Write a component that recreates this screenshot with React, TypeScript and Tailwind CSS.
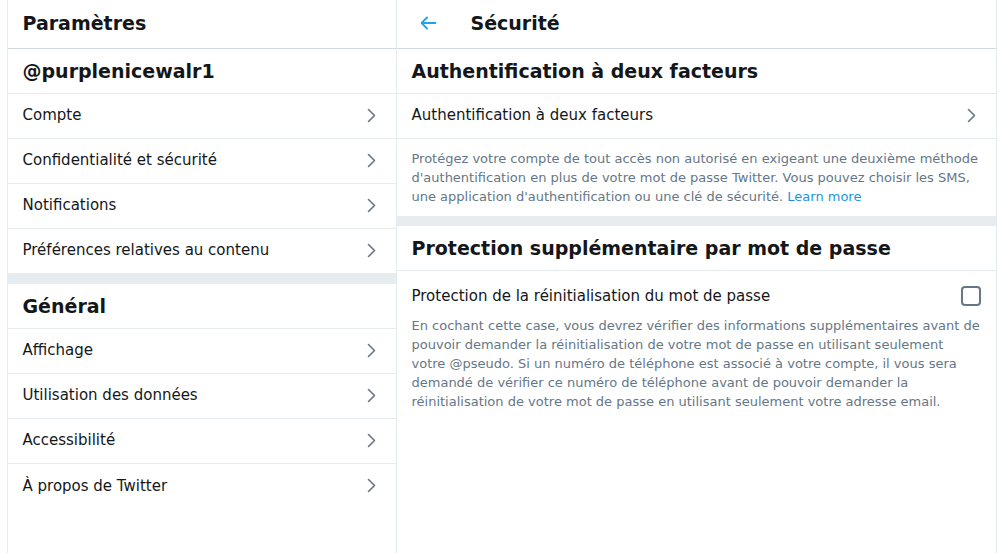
import React from "react";

const Chevron = () => (
  <div className="w-[19px] h-[19px] flex items-center justify-center shrink-0">
    <svg width="9" height="15" viewBox="0 0 9 15" fill="none">
      <polyline points="1.5,1.5 7.5,7.5 1.5,13.5" stroke="#657786" strokeWidth="1.6" strokeLinecap="round" strokeLinejoin="round" />
    </svg>
  </div>
);

const Row = ({ label, last }: { label: string; last?: boolean }) => (
  <div className={`h-[45px] px-[15px] pb-[2px] flex items-center justify-between ${last ? "" : "border-b border-[#e6ecf0]"}`}>
    <span className="text-[15px] leading-[20px]">{label}</span>
    <Chevron />
  </div>
);

const SectionHeader = ({ title }: { title: string }) => (
  <div className="h-[45px] px-[15px] flex items-center border-b border-[#e6ecf0]">
    <span className="text-[19px] font-bold leading-[24px]">{title}</span>
  </div>
);

const Band = () => <div className="h-[10px] bg-[#e6ecf0]" />;

export default function App() {
  return (
    <div className="w-full h-[553px] bg-white overflow-hidden flex justify-center font-['DejaVu_Sans',sans-serif] text-[#14171a]">
      {/* Left column */}
      <div className="w-[390px] shrink-0 border-x border-[#e6ecf0] flex flex-col">
        <div className="h-[49px] px-[15px] pb-[2px] flex items-center border-b border-[#cfd9de]">
          <span className="text-[19px] font-bold leading-[24px]">Paramètres</span>
        </div>
        <SectionHeader title="@purplenicewalr1" />
        <Row label="Compte" />
        <Row label="Confidentialité et sécurité" />
        <Row label="Notifications" />
        <Row label="Préférences relatives au contenu" />
        <Band />
        <SectionHeader title="Général" />
        <Row label="Affichage" />
        <Row label="Utilisation des données" />
        <Row label="Accessibilité" />
        <Row label="À propos de Twitter" last />
      </div>

      {/* Right column */}
      <div className="w-[600px] shrink-0 border-r border-[#e6ecf0] flex flex-col">
        <div className="h-[49px] px-[15px] pb-[2px] flex items-center border-b border-[#cfd9de]">
          <div className="w-[59px] shrink-0 flex items-center">
            <div className="w-[32px] h-[32px] flex items-center justify-center">
              <svg width="22" height="22" viewBox="0 0 24 24" fill="#1da1f2">
                <path d="M20 11H7.414l4.293-4.293c.39-.39.39-1.023 0-1.414s-1.023-.39-1.414 0l-6 6c-.39.39-.39 1.023 0 1.414l6 6c.195.195.45.293.707.293s.512-.098.707-.293c.39-.39.39-1.023 0-1.414L7.414 13H20c.553 0 1-.447 1-1s-.447-1-1-1z" />
              </svg>
            </div>
          </div>
          <span className="text-[19px] font-bold leading-[24px]">Sécurité</span>
        </div>
        <SectionHeader title="Authentification à deux facteurs" />
        <Row label="Authentification à deux facteurs" />
        <div className="px-[15px] pt-[10px] pb-[10px] text-[13px] leading-[19px] text-[#657786]">
          <div className="whitespace-nowrap">Protégez votre compte de tout accès non autorisé en exigeant une deuxième méthode</div>
          <div className="whitespace-nowrap">d'authentification en plus de votre mot de passe Twitter. Vous pouvez choisir les SMS,</div>
          <div className="whitespace-nowrap">
            une application d'authentification ou une clé de sécurité. <span className="text-[#1b95e0]">Learn more</span>
          </div>
        </div>
        <Band />
        <SectionHeader title="Protection supplémentaire par mot de passe" />
        <div className="h-[45px] px-[15px] pt-[4px] flex items-center justify-between">
          <span className="text-[15px] leading-[20px]">Protection de la réinitialisation du mot de passe</span>
          <div className="w-[20px] h-[20px] border-2 border-[#657786] rounded-[4px] shrink-0" />
        </div>
        <div className="px-[15px] text-[13px] leading-[19px] text-[#657786]">
          <div className="whitespace-nowrap">En cochant cette case, vous devrez vérifier des informations supplémentaires avant de</div>
          <div className="whitespace-nowrap">pouvoir demander la réinitialisation de votre mot de passe en utilisant seulement</div>
          <div className="whitespace-nowrap">votre @pseudo. Si un numéro de téléphone est associé à votre compte, il vous sera</div>
          <div className="whitespace-nowrap">demandé de vérifier ce numéro de téléphone avant de pouvoir demander la</div>
          <div className="whitespace-nowrap">réinitialisation de votre mot de passe en utilisant seulement votre adresse email.</div>
        </div>
      </div>
    </div>
  );
}
